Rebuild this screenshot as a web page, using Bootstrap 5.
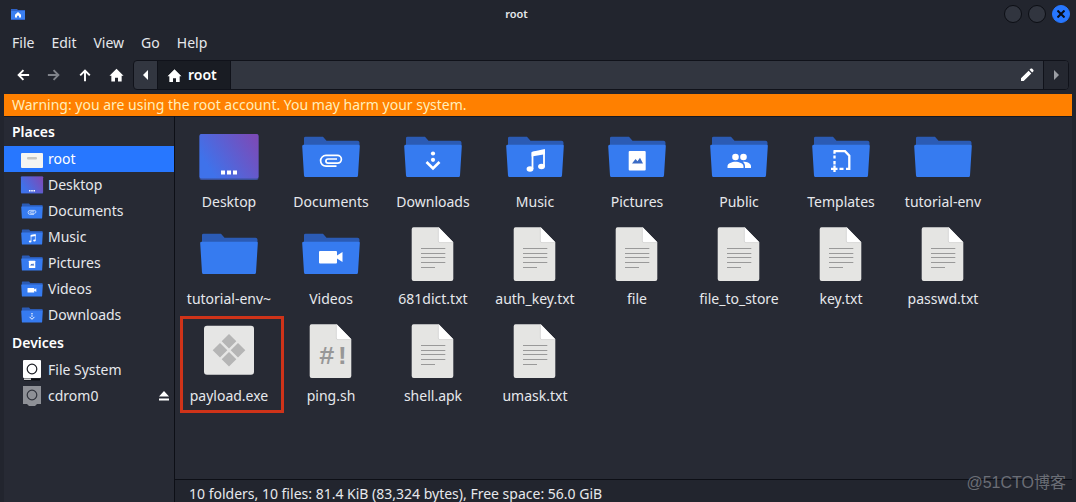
<!DOCTYPE html>
<html lang="en">
<head>
<meta charset="utf-8">
<meta name="viewport" content="width=device-width, initial-scale=1">
<title>root</title>
<link href="https://cdn.jsdelivr.net/npm/bootstrap@5.3.0/dist/css/bootstrap.min.css" rel="stylesheet">
<style>
  body { font-family: "Noto Sans", "Noto Sans CJK SC", sans-serif; font-size: 14px; line-height: 20px; color: #e6e8ec; background: #22252e; }
  button { font: inherit; color: inherit; background: none; border: 0; padding: 0; }
  svg { display: block; flex: none; }
  .fm-window { padding: 0 4px; }
  .title-bar { height: 28px; display: flex; gap: 6px; font-size: 11px; font-weight: 600; padding: 0 2px 0 7px; }
  .title-text { flex: 1; text-align: center; padding-left: 4px; }
  .win-btn { width: 18px; height: 18px; border-radius: 50%; background: #31353f; border: 1px solid #0c0e14; }
  .win-btn.close-btn { background: #2777ff; border-color: #2777ff; color: #0a0c14; }
  .menu-bar { height: 30px; padding: 0 8px; gap: 17px; }
  .tool-bar { height: 36px; padding: 2px 3px 4px 8px; }
  .nav-btn { width: 31px; height: 30px; color: #fff; }
  .nav-btn:disabled { color: #80838a; }
  .path-bar { border: 1px solid #10121a; border-radius: 4px; background: #323640; height: 30px; margin-left: -3px; overflow: hidden; }
  .path-step { width: 24px; border-right: 1px solid #10121a; }
  .path-current { width: 73px; padding-left: 9px; background: #191c23; border-right: 1px solid #10121a; font-weight: 600; gap: 6px; color: #fff; }
  .path-end { width: 25px; background: #242730; border-left: 1px solid #10121a; color: #9a9da3; }
  .path-edit { width: 32px; color: #fff; }
  .warning-bar { background: #ff8000; color: #ffeeba; height: 22px; padding: 0 8px; line-height: 22px; }
  .side-bar { width: 171px; background: #272a34; border-right: 1px solid #0d0f16; border-top: 1px solid #161922; }
  .side-bar h2 { font-size: 14px; font-weight: 600; line-height: 29px; margin: 0; padding-left: 8px; color: #fff; }
  .side-link { height: 26px; padding: 0 4px 0 16px; gap: 4px; color: #e6e8ec; text-decoration: none; }
  .side-link.current { background: #2777ff; color: #fff; }
  .side-row .side-link { flex: 1; }
  .eject-btn { width: 20px; height: 26px; color: #fff; }
  .files-pane { background: #272a34; border-top: 1px solid #161922; padding: 11px 3px; }
  .file-grid { display: grid; grid-template-columns: repeat(auto-fill, 102px); row-gap: 13px; }
  .file-item { color: #e6e8ec; text-decoration: none; gap: 6px; }
  .marked::after { content: ""; position: absolute; inset: -6px -4px -7px 2px; border: 3px solid #cf3319; }
  .status-bar { border-top: 1px solid #0d0f16; padding: 5px 14px 0; line-height: 17px; white-space: nowrap; }
  .water-mark { right: 10px; bottom: 9px; font-family: "Liberation Sans", "Noto Sans CJK SC", sans-serif; font-size: 16px; line-height: 20px; color: #6b6e76; }
</style>
</head>
<body>
<svg width="0" height="0" class="position-absolute" aria-hidden="true">
  <defs>
    <linearGradient id="desk" x1="0" y1=".7" x2="1" y2=".2"><stop offset=".1" stop-color="#3f72ea"/><stop offset="1" stop-color="#7b4bb8"/></linearGradient>
    <symbol id="folder" viewBox="0 0 64 58">
      <path d="M5 18V10q0-1.300 1.500-1.300H24l3.500 4H58.500q2 0 2 2V18z" fill="#2b5bb5"/>
      <path d="M4.600 16.700H59.400q1.500 0 1.400 1.500L59 47.500q-.1 1.500-1.500 1.500H6.500q-1.400 0-1.500-1.500L3.200 18.200q-.1-1.500 1.400-1.500z" fill="#367bf0"/>
    </symbol>
    <symbol id="desktop" viewBox="0 0 64 58"><rect x="2.500" y="6" width="59" height="46" rx="2" fill="#3a4f98"/><rect x="2.500" y="6" width="59" height="44.500" rx="2" fill="url(#desk)"/><path d="M24 42.500h4v4h-4zM30 42.500h4v4h-4zM36 42.500h4v4h-4z" fill="#fff"/></symbol>
    <symbol id="documents" viewBox="0 0 64 58"><use href="#folder"/><path d="M37.500 38.200H27a5.400 5.400 0 0 1 0-10.800H38.500a3.900 3.900 0 0 1 0 7.800H29a2 2 0 0 1 0-4.200H38" fill="none" stroke="#fff" stroke-width="1.700"/></symbol>
    <symbol id="downloads" viewBox="0 0 64 58"><use href="#folder"/><g fill="#fff"><circle cx="32" cy="25.500" r="2.100"/><circle cx="32" cy="31.800" r="2.100"/></g><path d="M25.500 34l6.500 6.500 6.500-6.500" fill="none" stroke="#fff" stroke-width="2.600"/></symbol>
    <symbol id="music" viewBox="0 0 64 58"><use href="#folder"/><path d="M29.500 24.600L41 22.200V38.500M29.500 24.600V41" fill="none" stroke="#fff" stroke-width="1.800"/><path d="M28.600 23.900L41.900 22v4.200L28.600 28.600z" fill="#fff"/><ellipse cx="27" cy="41" rx="3.400" ry="2.700" fill="#fff"/><ellipse cx="38.500" cy="38.500" rx="3.400" ry="2.700" fill="#fff"/></symbol>
    <symbol id="pictures" viewBox="0 0 64 58"><use href="#folder"/><rect x="23.700" y="23" width="17" height="19.500" rx="1" fill="#fff"/><path d="M27 35.500l3.500-4.500 2 2.300 2.500-3.500 3 5.700z" fill="#3a6bc5"/></symbol>
    <symbol id="public" viewBox="0 0 64 58"><use href="#folder"/><g fill="#fff"><circle cx="28.500" cy="29" r="3.300"/><circle cx="36.500" cy="29" r="3.300"/><path d="M20.500 40v-1.700c0-3 4.500-4.600 8-4.600s8 1.600 8 4.600V40zM38 40v-2c0-1.800-1-3.200-2.300-4.200 3.600-.2 8.300 1.300 8.300 4.200v2z"/></g></symbol>
    <symbol id="templates" viewBox="0 0 64 58"><use href="#folder"/><path d="M25.500 36.500V33M25.500 30.500V27.500M24.500 23.200H36l4.300 4.500V40.800H37M34.500 40.800H30.500M25.500 23.200v2.500M22 40.800h6.500M25.500 37.500v6.500" fill="none" stroke="#fff" stroke-width="2.300"/></symbol>
    <symbol id="videos" viewBox="0 0 64 58"><use href="#folder"/><path d="M21 26h16q1 0 1 1v3.500l5.500-3.500v10l-5.500-3.500V37.500q0 1-1 1H21q-1 0-1-1V27q0-1 1-1z" fill="#fff"/></symbol>
    <symbol id="page" viewBox="0 0 64 58"><path d="M12.500 2.300H37.700L52.300 17.300V54q0 2-2 2H12.700q-2 0-2-2V4.300q0-2 1.800-2z" fill="#e5e5e3"/><path d="M37.700 2.300L52.300 17.300H39q-1.300 0-1.300-1.300z" fill="#fff"/><path d="M37.300 3v13q0 1.600 1.700 1.600H52" fill="none" stroke="#cfcfcf" stroke-width=".6"/></symbol>
    <symbol id="textfile" viewBox="0 0 64 58"><use href="#page"/><path d="M20 23.500H44.300M20 28.500H44.300M20 32.500H44.300M20 37.500H44.300M20 42.500H34" stroke="#999" stroke-width="1"/></symbol>
    <symbol id="script" viewBox="0 0 64 58"><use href="#page"/><text x="20" y="42" font-family="Liberation Mono, monospace" font-weight="700" font-size="26" fill="#979797">#!</text></symbol>
    <symbol id="exe" viewBox="0 0 64 58"><rect x="7" y="3.700" width="50" height="49" rx="3" fill="#e6e6e5"/><path d="M32 12l7.300 7.300-7.300 7.300-7.300-7.300zM32 30l7.300 7.300-7.300 7.300-7.300-7.300zM23 21l7.300 7.300-7.300 7.300-7.300-7.300zM41 21l7.300 7.300-7.300 7.300-7.300-7.300z" fill="#b5b5b5"/></symbol>
    <symbol id="rootdir" viewBox="0 0 24 22"><rect x="1" y="5" width="22" height="15" rx="1" fill="#f5f5f2"/><rect x="7" y="9" width="10" height="2.500" rx="1" fill="#c6c6c2"/></symbol>
    <symbol id="disk" viewBox="0 0 24 22"><rect x="3" y="1" width="18" height="18" rx="1" fill="currentColor"/><path d="M4 19.500h16v2H4z" fill="#0b0c10"/><path d="M4 19.500h7v1.300H4z" fill="currentColor"/><circle cx="12" cy="10" r="4.800" fill="none" stroke="#1b1d24" stroke-width="1.200"/></symbol>
    <symbol id="cdrom" viewBox="0 0 24 22"><path d="M3 1h18v18h-4l-2 2H9l-2-2H3z" fill="#8e9096"/><circle cx="12" cy="10" r="4.800" fill="none" stroke="#30333c" stroke-width="1.200"/></symbol>
    <symbol id="house" viewBox="0 0 16 16"><path d="M8 1.200L15.500 8.700h-2V15H9.600v-4.200H6.400V15H2.500V8.700h-2z" fill="currentColor"/></symbol>
    <symbol id="arrow" viewBox="0 0 16 16"><path d="M15 8H3M8.500 2.500L3 8l5.500 5.500" fill="none" stroke="currentColor" stroke-width="2.200"/></symbol>
    <symbol id="arrow-right" viewBox="0 0 16 16"><path d="M1 8h12M7.500 2.500L13 8l-5.500 5.500" fill="none" stroke="currentColor" stroke-width="2.200"/></symbol>
    <symbol id="arrow-up" viewBox="0 0 16 16"><path d="M8 15V3M2.500 8.500L8 3l5.500 5.500" fill="none" stroke="currentColor" stroke-width="2.200"/></symbol>
  </defs>
</svg>

<div class="fm-window vh-100 d-flex flex-column overflow-hidden position-relative">
  <header class="title-bar align-items-center">
    <svg width="14" height="12" viewBox="0 0 14 12" role="img" aria-label="Home folder"><path d="M0 1h6l1 1h7v10H0z" fill="#2f63c8"/><path d="M0 3h14v8H0z" fill="#3b7ff0"/><path d="M7 4l3 2.800V9.500H8V7.800H6v1.700H4V6.800z" fill="#fff"/></svg>
    <span class="title-text">root</span>
    <button class="win-btn" aria-label="Minimize"></button>
    <button class="win-btn" aria-label="Maximize"></button>
    <button class="win-btn close-btn d-flex align-items-center justify-content-center" aria-label="Close"><svg width="8" height="8" viewBox="0 0 8 8"><path d="M.5.500l7 7M7.500.500l-7 7" stroke="currentColor" stroke-width="2"/></svg></button>
  </header>

  <nav class="menu-bar d-flex align-items-center" aria-label="Menu">
    <button>File</button><button>Edit</button><button>View</button><button>Go</button><button>Help</button>
  </nav>

  <div class="tool-bar d-flex">
    <button class="nav-btn ps-1 d-flex align-items-center" aria-label="Back"><svg width="14" height="14"><use href="#arrow"/></svg></button>
    <button class="nav-btn ps-1 d-flex align-items-center" aria-label="Forward" disabled><svg width="14" height="14"><use href="#arrow-right"/></svg></button>
    <button class="nav-btn ps-1 d-flex align-items-center" aria-label="Up"><svg width="14" height="14"><use href="#arrow-up"/></svg></button>
    <button class="nav-btn ps-1 d-flex align-items-center" aria-label="Home"><svg width="15" height="16"><use href="#house"/></svg></button>
    <div class="path-bar d-flex flex-grow-1">
      <button class="path-step d-flex align-items-center justify-content-center" aria-label="Previous"><svg width="5" height="10" viewBox="0 0 5 10"><path d="M5 0v10L0 5z" fill="#fff"/></svg></button>
      <button class="path-current d-flex align-items-center"><svg width="15" height="15"><use href="#house"/></svg>root</button>
      <button class="path-edit ms-auto d-flex align-items-center justify-content-center" aria-label="Edit path"><svg width="14" height="14" viewBox="0 0 14 14"><path d="M1 10.300L8.600 2.700l2.700 2.700L3.700 13H1zM9.500 1.800L10.800.600q.6-.4 1.200 0l1.400 1.400q.4.600 0 1.200L12.200 4.500z" fill="#fff"/></svg></button>
      <button class="path-end d-flex align-items-center justify-content-center" aria-label="Next"><svg width="5" height="10" viewBox="0 0 5 10"><path d="M0 0v10l5-5z" fill="currentColor"/></svg></button>
    </div>
  </div>

  <div class="warning-bar text-truncate flex-shrink-0" role="alert">Warning: you are using the root account. You may harm your system.</div>

  <div class="d-flex flex-grow-1 overflow-hidden">
    <aside class="side-bar flex-shrink-0">
      <h2>Places</h2>
      <nav aria-label="Places">
        <a class="side-link current d-flex align-items-center" href="#"><svg width="24" height="22"><use href="#rootdir"/></svg>root</a>
        <a class="side-link d-flex align-items-center" href="#"><svg width="24" height="22"><use href="#desktop"/></svg>Desktop</a>
        <a class="side-link d-flex align-items-center" href="#"><svg width="24" height="22"><use href="#documents"/></svg>Documents</a>
        <a class="side-link d-flex align-items-center" href="#"><svg width="24" height="22"><use href="#music"/></svg>Music</a>
        <a class="side-link d-flex align-items-center" href="#"><svg width="24" height="22"><use href="#pictures"/></svg>Pictures</a>
        <a class="side-link d-flex align-items-center" href="#"><svg width="24" height="22"><use href="#videos"/></svg>Videos</a>
        <a class="side-link d-flex align-items-center" href="#"><svg width="24" height="22"><use href="#downloads"/></svg>Downloads</a>
      </nav>
      <h2>Devices</h2>
      <nav aria-label="Devices">
        <a class="side-link d-flex align-items-center" href="#"><svg width="24" height="22" color="#fff"><use href="#disk"/></svg>File System</a>
        <div class="side-row d-flex">
          <a class="side-link d-flex align-items-center" href="#"><svg width="24" height="22"><use href="#cdrom"/></svg>cdrom0</a>
          <button class="eject-btn d-flex align-items-center justify-content-center" aria-label="Eject"><svg width="10" height="10" viewBox="0 0 10 10"><path d="M5 0l5 5.500H0zM0 7.500h10v2H0z" fill="currentColor"/></svg></button>
        </div>
      </nav>
    </aside>

    <div class="d-flex flex-column flex-grow-1 overflow-hidden">
      <main class="files-pane flex-grow-1 overflow-hidden">
        <div class="file-grid">
          <a class="file-item d-flex flex-column align-items-center" href="#"><svg width="64" height="58"><use href="#desktop"/></svg><span>Desktop</span></a>
          <a class="file-item d-flex flex-column align-items-center" href="#"><svg width="64" height="58"><use href="#documents"/></svg><span>Documents</span></a>
          <a class="file-item d-flex flex-column align-items-center" href="#"><svg width="64" height="58"><use href="#downloads"/></svg><span>Downloads</span></a>
          <a class="file-item d-flex flex-column align-items-center" href="#"><svg width="64" height="58"><use href="#music"/></svg><span>Music</span></a>
          <a class="file-item d-flex flex-column align-items-center" href="#"><svg width="64" height="58"><use href="#pictures"/></svg><span>Pictures</span></a>
          <a class="file-item d-flex flex-column align-items-center" href="#"><svg width="64" height="58"><use href="#public"/></svg><span>Public</span></a>
          <a class="file-item d-flex flex-column align-items-center" href="#"><svg width="64" height="58"><use href="#templates"/></svg><span>Templates</span></a>
          <a class="file-item d-flex flex-column align-items-center" href="#"><svg width="64" height="58"><use href="#folder"/></svg><span>tutorial-env</span></a>
          <a class="file-item d-flex flex-column align-items-center" href="#"><svg width="64" height="58"><use href="#folder"/></svg><span>tutorial-env~</span></a>
          <a class="file-item d-flex flex-column align-items-center" href="#"><svg width="64" height="58"><use href="#videos"/></svg><span>Videos</span></a>
          <a class="file-item d-flex flex-column align-items-center" href="#"><svg width="64" height="58"><use href="#textfile"/></svg><span>681dict.txt</span></a>
          <a class="file-item d-flex flex-column align-items-center" href="#"><svg width="64" height="58"><use href="#textfile"/></svg><span>auth_key.txt</span></a>
          <a class="file-item d-flex flex-column align-items-center" href="#"><svg width="64" height="58"><use href="#textfile"/></svg><span>file</span></a>
          <a class="file-item d-flex flex-column align-items-center" href="#"><svg width="64" height="58"><use href="#textfile"/></svg><span>file_to_store</span></a>
          <a class="file-item d-flex flex-column align-items-center" href="#"><svg width="64" height="58"><use href="#textfile"/></svg><span>key.txt</span></a>
          <a class="file-item d-flex flex-column align-items-center" href="#"><svg width="64" height="58"><use href="#textfile"/></svg><span>passwd.txt</span></a>
          <a class="file-item marked position-relative d-flex flex-column align-items-center" href="#"><svg width="64" height="58"><use href="#exe"/></svg><span>payload.exe</span></a>
          <a class="file-item d-flex flex-column align-items-center" href="#"><svg width="64" height="58"><use href="#script"/></svg><span>ping.sh</span></a>
          <a class="file-item d-flex flex-column align-items-center" href="#"><svg width="64" height="58"><use href="#textfile"/></svg><span>shell.apk</span></a>
          <a class="file-item d-flex flex-column align-items-center" href="#"><svg width="64" height="58"><use href="#textfile"/></svg><span>umask.txt</span></a>
        </div>
      </main>
      <footer class="status-bar">10 folders, 10 files: 81.4 KiB (83,324 bytes), Free space: 56.0 GiB</footer>
    </div>
  </div>
  <div class="water-mark position-absolute">@51CTO博客</div>
</div>
<script src="https://cdn.jsdelivr.net/npm/bootstrap@5.3.0/dist/js/bootstrap.bundle.min.js"></script>
</body>
</html>
